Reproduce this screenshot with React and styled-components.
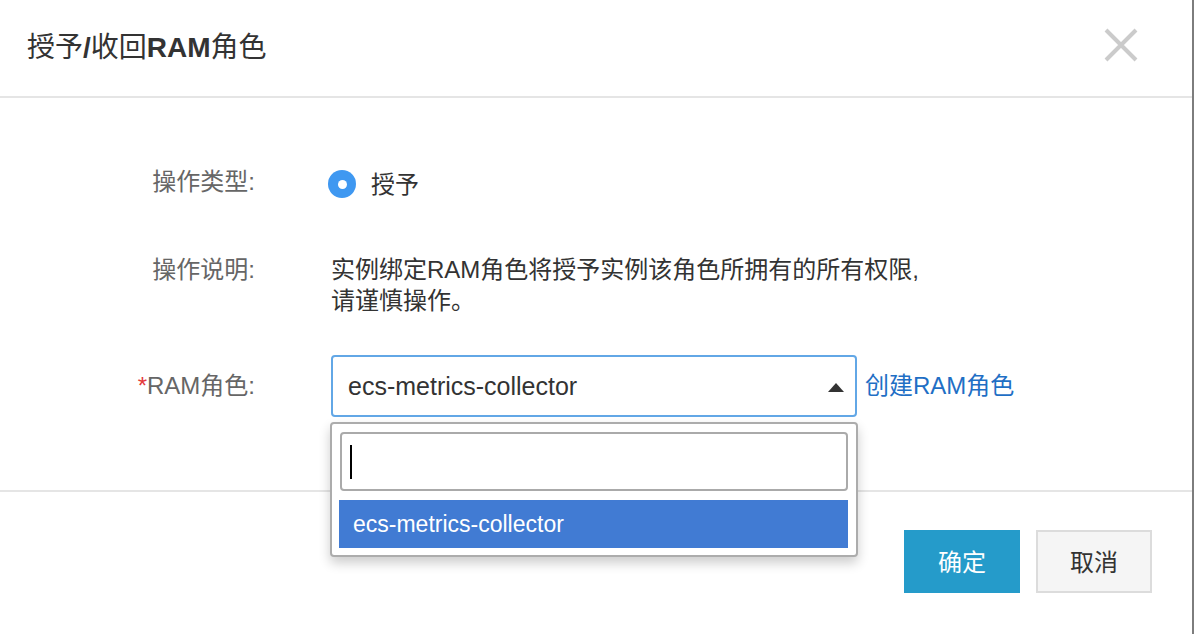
import styled, { createGlobalStyle } from "styled-components";

const Global = createGlobalStyle`
  html, body {
    margin: 0;
    padding: 0;
  }
  body {
    background: #7d7d7d;
    font-family: "Liberation Sans", "Noto Sans CJK SC", sans-serif;
    overflow: hidden;
  }
`;

const Screen = styled.div`
  width: 1194px;
  height: 634px;
  display: flex;
  background: #7d7d7d;
`;

const Modal = styled.div`
  width: 1192px;
  height: 634px;
  background: #fff;
  display: flex;
  flex-direction: column;
`;

const Header = styled.div`
  height: 98px;
  box-sizing: border-box;
  border-bottom: 2px solid #e5e5e5;
  display: flex;
  align-items: center;
  justify-content: space-between;
  padding: 0 54px 6px 27px;
`;

const Title = styled.h2`
  margin: 0;
  font-size: 28px;
  font-weight: normal;
  color: #333;
  b {
    font-weight: bold;
  }
`;

const Close = styled.button`
  width: 34px;
  height: 34px;
  padding: 0;
  border: none;
  background: none;
  display: flex;
`;

const Body = styled.div`
  flex: 1;
  padding-top: 64px;
`;

const Row = styled.div`
  display: grid;
  grid-template-columns: 255px 1fr;
  column-gap: 76px;
  align-items: ${(p) => p.$align || "center"};
  margin-top: ${(p) => p.$mt || 0}px;
`;

const Label = styled.div`
  text-align: right;
  font-size: 24px;
  line-height: ${(p) => p.$lh || 40}px;
  color: #666;
  white-space: nowrap;
`;

const Star = styled.span`
  color: #e4393c;
`;

const Radio = styled.label`
  display: flex;
  align-items: center;
  gap: 15px;
  margin-left: -3px;
  font-size: 24px;
  color: #333;
  height: 40px;
`;

const Dot = styled.span`
  width: 28px;
  height: 28px;
  border-radius: 50%;
  background: #3f98f1;
  display: flex;
  align-items: center;
  justify-content: center;
  margin-top: 4px;
  &::after {
    content: "";
    width: 9px;
    height: 9px;
    border-radius: 50%;
    background: #fff;
  }
`;

const Desc = styled.div`
  font-size: 24px;
  line-height: 31px;
  color: #333;
`;

const Field = styled.div`
  display: flex;
  align-items: center;
`;

const SelectWrap = styled.div`
  position: relative;
`;

const SelectBox = styled.div`
  width: 526px;
  height: 62px;
  box-sizing: border-box;
  border: 2px solid #62a7e6;
  border-radius: 4px;
  display: flex;
  align-items: center;
  justify-content: space-between;
  padding: 0 11px 0 15px;
  font-size: 25px;
  color: #333;
`;

const Caret = styled.span`
  width: 0;
  height: 0;
  border-left: 8px solid transparent;
  border-right: 8px solid transparent;
  border-bottom: 9px solid #333;
  margin-top: 2px;
`;

const Link = styled.a`
  margin-left: 8px;
  font-size: 24px;
  color: #1f6fc5;
  text-decoration: none;
  margin-bottom: 6px;
`;

const Dropdown = styled.div`
  position: absolute;
  top: 67px;
  left: -1px;
  width: 528px;
  height: 135px;
  box-sizing: border-box;
  border: 2px solid #acacac;
  border-radius: 4px;
  background: #fff;
  padding: 8px 8px 7px 7px;
  box-shadow: 0 6px 12px rgba(0, 0, 0, 0.2);
`;

const Search = styled.div`
  height: 59px;
  box-sizing: border-box;
  border: 2px solid #aaa;
  border-radius: 4px;
  margin-left: 1px;
  display: flex;
  align-items: center;
  padding-left: 8px;
  &::before {
    content: "";
    width: 2px;
    height: 34px;
    background: #000;
  }
`;

const Option = styled.div`
  margin-top: 9px;
  height: 48px;
  background: #417bd3;
  color: #fff;
  font-size: 23px;
  display: flex;
  align-items: center;
  padding-left: 14px;
`;

const Footer = styled.div`
  height: 144px;
  box-sizing: border-box;
  border-top: 2px solid #e5e5e5;
  display: flex;
  justify-content: flex-end;
  align-items: flex-start;
  gap: 16px;
  padding: 38px 40px 0 0;
`;

const Button = styled.button`
  width: 116px;
  height: 63px;
  box-sizing: border-box;
  font-family: inherit;
  font-size: 24px;
  border: ${(p) => (p.$primary ? "none" : "2px solid #dcdcdc")};
  background: ${(p) => (p.$primary ? "#259bca" : "#f5f5f5")};
  color: ${(p) => (p.$primary ? "#fff" : "#333")};
  padding: 0 0 3px;
`;

export default function App() {
  return (
    <Screen>
      <Global />
      <Modal>
        <Header>
          <Title>
            授予<b>/</b>收回<b>RAM</b>角色
          </Title>
          <Close>
            <svg width="34" height="34" viewBox="0 0 34 34">
              <path d="M2 2 L32 32 M32 2 L2 32" stroke="#cbcbcb" strokeWidth="4" />
            </svg>
          </Close>
        </Header>
        <Body>
          <Row>
            <Label>操作类型:</Label>
            <Radio>
              <Dot />
              授予
            </Radio>
          </Row>
          <Row $mt={52} $align="start">
            <Label $lh={31}>操作说明:</Label>
            <Desc>
              实例绑定RAM角色将授予实例该角色所拥有的所有权限,
              <br />
              请谨慎操作。
            </Desc>
          </Row>
          <Row $mt={39}>
            <Label>
              <Star>*</Star>RAM角色:
            </Label>
            <Field>
              <SelectWrap>
                <SelectBox>
                  ecs-metrics-collector
                  <Caret />
                </SelectBox>
                <Dropdown>
                  <Search />
                  <Option>ecs-metrics-collector</Option>
                </Dropdown>
              </SelectWrap>
              <Link href="#">创建RAM角色</Link>
            </Field>
          </Row>
        </Body>
        <Footer>
          <Button $primary>确定</Button>
          <Button>取消</Button>
        </Footer>
      </Modal>
    </Screen>
  );
}
